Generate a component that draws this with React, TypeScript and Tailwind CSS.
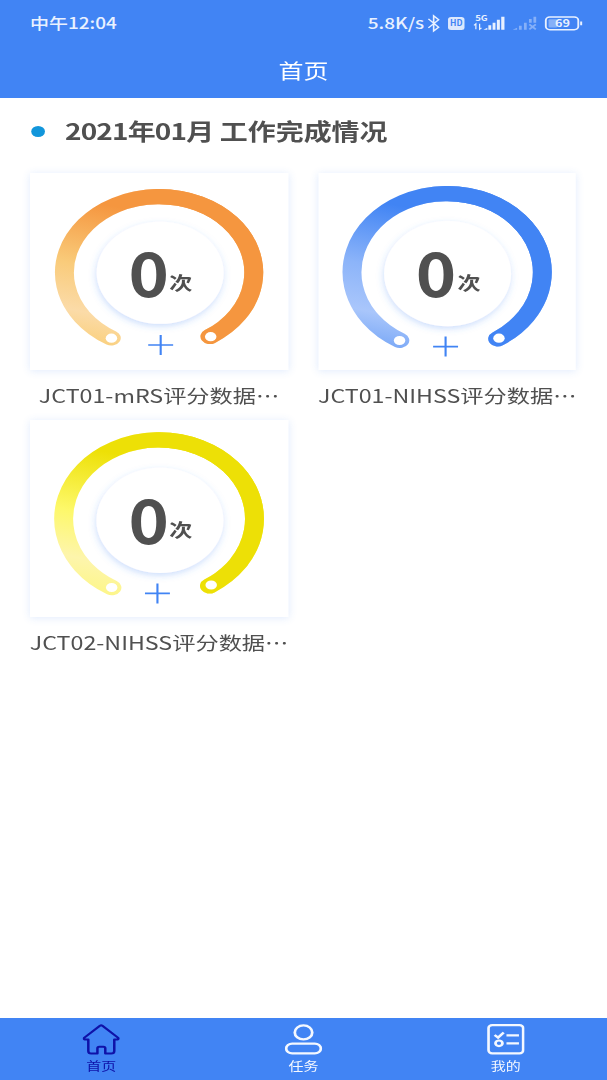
import React from 'react';

interface GaugeShape {
  id: string;
  arc: string;
  caps: [number, number][];
  disc: { cx: number; cy: number; ry: number };
  plus: [number, number];
  stops: [string, string, string, string];
}

interface Task {
  title: string;
  count: number;
  gauge: GaugeShape;
}

const tasks: Task[] = [
  {
    title: 'JCT01-mRS评分数据⋯',
    count: 0,
    gauge: {
      id: 'orange',
      arc: 'M65.2 165 A75.9 75.9 0 1 1 144.3 163.5',
      caps: [[65.3, 165.2], [144.9, 163.7]],
      disc: { cx: 104.4, cy: 99.8, ry: 51 },
      plus: [104.8, 172],
      stops: ['#fad07e', '#fbdba8', '#f9cb7a', '#f5963f'],
    },
  },
  {
    title: 'JCT01-NIHSS评分数据⋯',
    count: 0,
    gauge: {
      id: 'blue',
      arc: 'M65.2 167.4 A76.3 78.6 0 1 1 143.7 165.8',
      caps: [[65, 167.5], [144.7, 165.2]],
      disc: { cx: 103.5, cy: 100.6, ry: 52.6 },
      plus: [101.9, 173.6],
      stops: ['#7eabf7', '#a9c6fb', '#8cb4f9', '#4184f4'],
    },
  },
  {
    title: 'JCT02-NIHSS评分数据⋯',
    count: 0,
    gauge: {
      id: 'yellow',
      arc: 'M65.7 167.6 A76.5 79 0 1 1 143.9 166',
      caps: [[65.5, 167.5], [145.3, 165]],
      disc: { cx: 104.2, cy: 100.4, ry: 52.6 },
      plus: [102.2, 173.4],
      stops: ['#fdf68a', '#fdf5ac', '#fdf869', '#ede006'],
    },
  },
];

const Gauge: React.FC<{ shape: GaugeShape }> = ({ shape }) => {
  const { id, disc, plus, stops } = shape;
  return (
    <svg className="absolute inset-0 w-full h-full" viewBox="0 0 207 197" preserveAspectRatio="none" fill="none">
      <defs>
        <linearGradient id={`ring-${id}`} gradientUnits="userSpaceOnUse" x1="52" y1="172" x2="88" y2="26">
          <stop offset="0" stopColor={stops[0]} />
          <stop offset="0.2" stopColor={stops[1]} />
          <stop offset="0.5" stopColor={stops[2]} />
          <stop offset="0.92" stopColor={stops[3]} />
        </linearGradient>
        {/* the right half of the ring stays solid */}
        <linearGradient id={`solid-${id}`} gradientUnits="userSpaceOnUse" x1="70" y1="0" x2="104" y2="0">
          <stop offset="0" stopColor={stops[3]} stopOpacity="0" />
          <stop offset="1" stopColor={stops[3]} />
        </linearGradient>
        <clipPath id={`half-${id}`}>
          <path d="M70 0 H207 V197 H104 V100 H70 Z" />
        </clipPath>
        <filter id={`glow-${id}`} x="-20%" y="-20%" width="140%" height="140%">
          <feDropShadow dx="-0.5" dy="2.5" stdDeviation="3" floodColor="#4184f4" floodOpacity="0.26" />
        </filter>
      </defs>
      <path d={shape.arc} stroke={`url(#ring-${id})`} strokeWidth="15.2" strokeLinecap="round" />
      <path
        d={shape.arc}
        stroke={`url(#solid-${id})`}
        strokeWidth="15.2"
        strokeLinecap="round"
        clipPath={`url(#half-${id})`}
      />
      {shape.caps.map(([x, y]) => (
        <circle key={x} cx={x} cy={y} r="4.6" fill="#fff" />
      ))}
      <ellipse cx={disc.cx} cy={disc.cy} rx="50.9" ry={disc.ry} fill="#fff" filter={`url(#glow-${id})`} />
      <path
        d={`M${plus[0] - 10} ${plus[1]} h20 M${plus[0]} ${plus[1] - 10} v20`}
        stroke="#4184f4"
        strokeWidth="1.7"
      />
    </svg>
  );
};

const TaskCard: React.FC<{ task: Task }> = ({ task }) => (
  <div className="flex flex-col">
    <div className="relative h-[197px] bg-white shadow-[0_1px_7px_rgba(66,133,244,0.16)]">
      <Gauge shape={task.gauge} />
      <div className="relative flex h-full items-end justify-center pb-[54px] text-[#505050] font-bold">
        <span className="scale-x-[0.9] text-[61px] leading-[90px]">{task.count}</span>
        <span className="-ml-px pb-[24.5px] text-[18.5px] leading-none">次</span>
      </div>
    </div>
    <div className="flex h-[50px] items-center justify-center whitespace-nowrap text-[18.6px] text-[#505050]">
      {task.title}
    </div>
  </div>
);

const StatusBar = () => (
  <div className="flex h-[45px] items-center justify-between pl-[24px] pr-[18.4px] text-[15.2px] font-medium text-[#e9f1ff]">
    <span>中午12:04</span>
    <div className="flex items-center">
      <span className="mr-[2.5px]">5.8K/s</span>
      <svg width="125.5" height="24" viewBox="0 0 125.5 24" fill="none">
        {/* bluetooth */}
        <path d="M1 7.9 L9.2 16.2 L5.2 20 V4.8 L9.2 8.7 L1 16.9" stroke="#e9f1ff" strokeWidth="1.3" />
        {/* HD badge */}
        <rect x="16.7" y="6" width="13.2" height="13" rx="2.5" fill="#dce8fd" />
        <text x="18.3" y="15.4" fontSize="8.2" fontWeight="700" textLength="10" lengthAdjust="spacingAndGlyphs" fill="#4184f4">HD</text>
        {/* 5G signal */}
        <text x="38.5" y="10.2" fontSize="7.6" fontWeight="700" textLength="10" lengthAdjust="spacingAndGlyphs" fill="#e9f1ff">5G</text>
        <path d="M39 18.3 V12.8 L37.5 14.3 M42 12.8 V18.3 L43.5 16.8" stroke="#e9f1ff" strokeWidth="1" />
        <path d="M45 18.8 h3.2 v-2 z M49 18.8 v-4.5 h2.3 v4.5z M52.4 18.8 v-7 h2.3 v7z M55.8 18.8 v-10 h2.4 v10z M59.3 18.8 V5.8 h2.6 v13z" fill="#e9f1ff" />
        {/* second sim, no service */}
        <path d="M68.5 18.8 h3.5 v-2 z M73.5 18.8 v-4 h2.2 v4z M77.5 18.8 v-7 h2.2 v7z M81.5 11.8 v-3.8 h2.2 v3.8z M85.1 11.8 V5.8 h2.2 v6z" fill="#86b0f8" />
        <path d="M81.8 13.4 l5.2 5 M87 13.4 l-5.2 5" stroke="#86b0f8" strokeWidth="1.5" />
        {/* battery */}
        <rect x="95" y="6.1" width="26" height="12.6" rx="3.2" stroke="#e9f1ff" strokeWidth="1.5" />
        <rect x="97.2" y="8.3" width="7" height="8.2" rx="1" fill="#86b0f8" />
        <path d="M123.3 10.6 v3.6" stroke="#e9f1ff" strokeWidth="1.6" />
        <text x="102.3" y="16.2" fontSize="10.2" fontWeight="700" textLength="12" lengthAdjust="spacingAndGlyphs" fill="#e9f1ff">69</text>
      </svg>
    </div>
  </div>
);

const HomeIcon = () => (
  <svg width="30" height="31" viewBox="0 0 30 31" fill="none" stroke="currentColor" strokeWidth="2" strokeLinejoin="round">
    <path d="M14 1.8 Q15 1 16 1.8 L28.4 13.6 Q29.4 15.2 28 15.6 H25.5 V27 Q25.5 29.6 23 29.6 H18.3 V24.5 Q18.3 22.8 16.8 22.8 H13.5 Q12 22.8 12 24.5 V29.6 H7 Q4.7 29.6 4.7 27 V15.6 H2 Q0.6 15.2 1.6 13.6 Z" />
  </svg>
);

const TaskIcon = () => (
  <svg width="30" height="31" viewBox="0 0 30 31" fill="none" stroke="currentColor" strokeWidth="2.2">
    <circle cx="15" cy="8.4" r="7" />
    <rect x="1.1" y="19.6" width="27.8" height="9.8" rx="4.9" />
  </svg>
);

const MineIcon = () => (
  <svg width="30" height="31" viewBox="0 0 30 31" fill="none" stroke="currentColor" strokeWidth="2.2">
    <rect x="1.1" y="1.1" width="27.8" height="28.2" rx="3" />
    <path d="M6 11 L8.8 13.6 L13.3 8.6 M15.5 11.3 H25.5 M15.5 19.3 H25.5" />
    <circle cx="9.5" cy="19.3" r="2.8" />
  </svg>
);

const tabs = [
  { label: '首页', icon: <HomeIcon />, active: true },
  { label: '任务', icon: <TaskIcon />, active: false },
  { label: '我的', icon: <MineIcon />, active: false },
];

const App: React.FC = () => {
  return (
    <div className="h-[1080px] w-[607px] overflow-hidden bg-white">
      {/* wide-pixel display: content is laid out at 486px and stretched sideways */}
      <div className="flex h-full w-[486px] origin-top-left scale-x-[1.249] flex-col font-['Noto_Sans_CJK_SC','Noto_Sans',sans-serif]">
        <header className="h-[97.5px] bg-[#4184f4]">
          <StatusBar />
          <h1 className="text-center text-[20px] leading-[52px] font-normal text-white">首页</h1>
        </header>

        <main className="flex-1 pl-[24px] pr-[24.6px]">
          <div className="flex h-[75.5px] items-center pb-[8px]">
            <span className="mr-[16px] ml-[0.5px] size-[11.5px] shrink-0 rounded-full bg-[#1296db]" />
            <h2 className="pb-[1.5px] text-[22.4px] leading-none font-bold whitespace-nowrap text-[#505050]">
              <span className="tracking-[-0.65px]">2021年01月</span> 工作完成情况
            </h2>
          </div>
          <div className="grid grid-cols-2 gap-x-[24px]">
            {tasks.map((task) => (
              <TaskCard key={task.title} task={task} />
            ))}
          </div>
        </main>

        <nav className="grid h-[62px] grid-cols-3 bg-[#4184f4]">
          {tabs.map((tab) => (
            <div
              key={tab.label}
              className={`flex flex-col items-center pt-[6px] ${tab.active ? 'text-[#0f12a8]' : 'text-[#f4f8ff]'}`}
            >
              {tab.icon}
              <span className="text-[12px] leading-[21px]">{tab.label}</span>
            </div>
          ))}
        </nav>
      </div>
    </div>
  );
};

export default App;
